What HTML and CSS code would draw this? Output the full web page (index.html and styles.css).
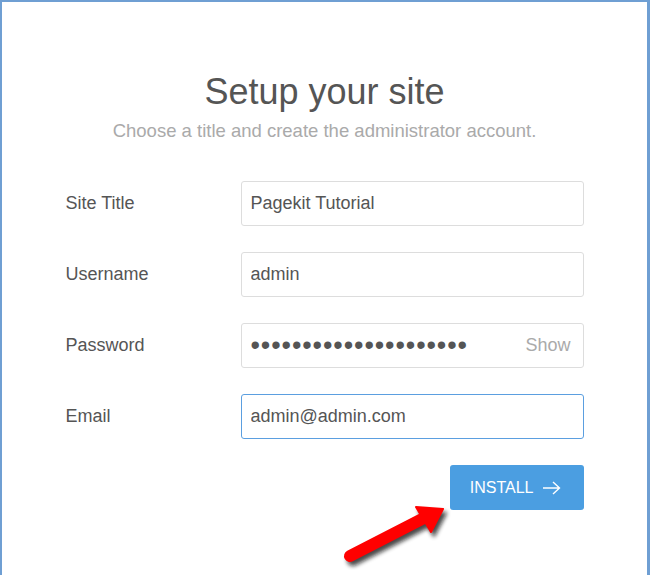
FILE: index.html
```html
<!DOCTYPE html>
<html lang="en">
<head>
    <meta charset="UTF-8">
    <title>Setup your site</title>
    <link rel="stylesheet" href="styles.css">
</head>
<body>

<div class="frame">

    <div class="setup">
        <h1 class="setup-title">Setup your site</h1>
        <p class="setup-lead">Choose a title and create the administrator account.</p>

        <form id="SetupForm" class="setup-form">
            <div class="row">
                <label class="row-label" for="siteTitle">Site Title</label>
                <input class="field" id="siteTitle" type="text" value="Pagekit Tutorial">
            </div>
            <div class="row">
                <label class="row-label" for="username">Username</label>
                <input class="field" id="username" type="text" value="admin">
            </div>
            <div class="row">
                <label class="row-label" for="password">Password</label>
                <div class="field field-password">
                    <input class="field-inner" id="password" type="password" value="pagekittutorial123456">
                    <a class="show-link" href="#">Show</a>
                </div>
            </div>
            <div class="row">
                <label class="row-label" for="email">Email</label>
                <div class="field field-focus">
                    <input class="field-inner field-text" id="email" type="text" value="admin@admin.com">
                </div>
            </div>

            <div class="actions">
                <button class="btn-install" type="submit">
                    INSTALL
                    <svg class="btn-arrow" width="19" height="14" viewBox="0 0 19 14">
                        <path d="M1 7 H17.5 M11 1 L17.5 7 L11 13" fill="none" stroke="#fff" stroke-width="1.4"/>
                    </svg>
                </button>
            </div>
        </form>
    </div>

    <!-- pil der peger paa knappen -->
    <svg class="pointer" width="650" height="575" viewBox="0 0 650 575">
        <defs>
            <filter id="shade" x="-20%" y="-20%" width="140%" height="140%">
                <feGaussianBlur stdDeviation="2"/>
            </filter>
        </defs>
        <g transform="translate(3 4)" fill="#111" stroke="#111" opacity="0.75" filter="url(#shade)">
            <line x1="350" y1="556" x2="424" y2="518" stroke-width="12" stroke-linecap="round"/>
            <polygon points="443,509 416,507 431,532" stroke-width="2" stroke-linejoin="round"/>
        </g>
        <g fill="#f00" stroke="#f00">
            <line x1="350" y1="556" x2="424" y2="518" stroke-width="12" stroke-linecap="round"/>
            <polygon points="443,509 416,507 431,532" stroke-width="2" stroke-linejoin="round"/>
        </g>
    </svg>

</div>

</body>
</html>
```

FILE: styles.css
```css
html, body {
    margin: 0;
    padding: 0;
    background: #fff;
}

body {
    font-family: "Liberation Sans", Arial, sans-serif;
    color: #555;
}

.frame {
    position: relative;
    height: 575px;
    box-sizing: border-box;
    border-top: 2px solid #6f9fd3;
    border-left: 2px solid #6f9fd3;
    border-right: 3px solid #6f9fd3;
    overflow: hidden;
}

.setup {
    width: 518px;
    margin: 0 auto;
    padding-top: 68px;
}

.setup-title {
    margin: 0;
    font-size: 36px;
    line-height: 44px;
    font-weight: normal;
    text-align: center;
    color: #555;
}

.setup-lead {
    margin: 6px 0 0 0;
    font-size: 18.5px;
    line-height: 22px;
    text-align: center;
    color: #aaa;
}

.setup-form {
    margin-top: 39px;
    display: flex;
    flex-direction: column;
    gap: 26px;
}

.row {
    display: flex;
    align-items: center;
}

.row-label {
    width: 175px;
    font-size: 18px;
    color: #555;
}

.field {
    width: 343px;
    height: 45px;
    box-sizing: border-box;
    border: 1px solid #ddd;
    border-radius: 3px;
    padding: 0 9px;
    font-family: inherit;
    font-size: 18px;
    color: #555;
    background: #fff;
    outline: none;
}

.field.field-focus {
    display: flex;
    align-items: center;
    border-color: #5b9fe0;
}

.field-password {
    display: flex;
    align-items: center;
    padding-right: 12px;
}

.field-inner {
    flex: 1;
    min-width: 0;
    border: none;
    outline: none;
    padding: 0;
    margin: 0;
    font-family: "Liberation Sans", Arial, sans-serif;
    font-size: 27px;
    letter-spacing: 0.9px;
    color: #555;
    background: transparent;
}

.field-inner.field-text {
    font-size: 18px;
    letter-spacing: normal;
    caret-color: #333;
}

.show-link {
    font-size: 18px;
    color: #aaa;
    text-decoration: none;
}

.actions {
    display: flex;
    justify-content: flex-end;
}

.btn-install {
    display: flex;
    align-items: center;
    gap: 8px;
    height: 45px;
    padding: 0 23px 0 20px;
    border: none;
    border-radius: 3px;
    background: #4b9ee1;
    color: #fff;
    font-family: inherit;
    font-size: 16px;
    cursor: pointer;
}

.pointer {
    position: absolute;
    left: -2px;
    top: -2px;
    pointer-events: none;
}
```
